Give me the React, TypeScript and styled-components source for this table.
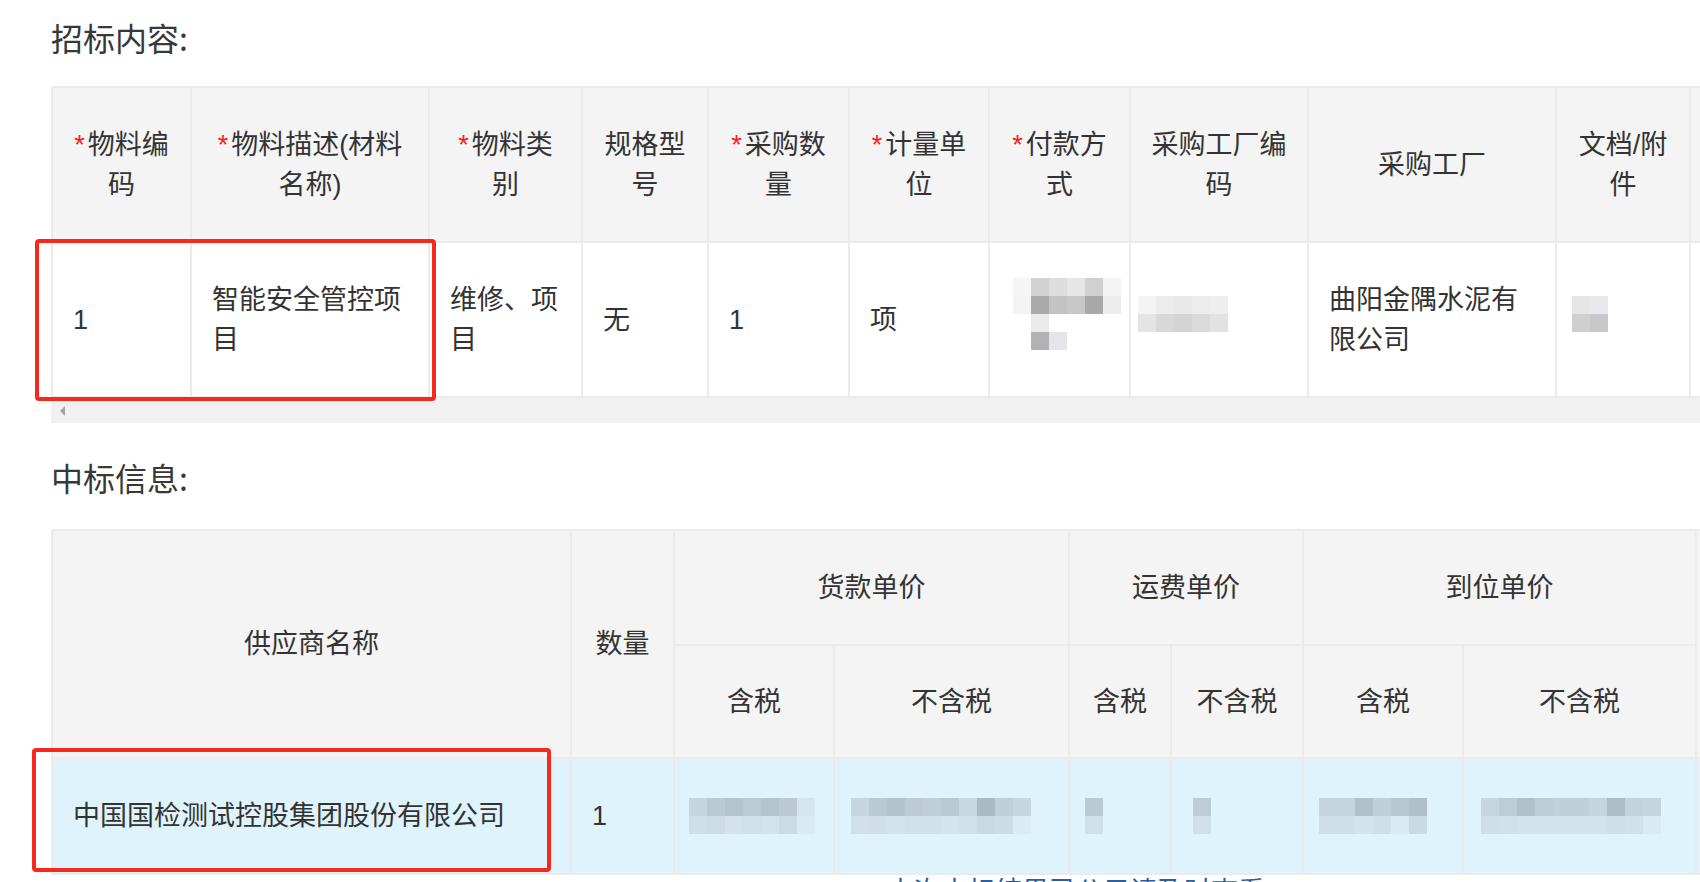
import React from "react";
import styled, { createGlobalStyle } from "styled-components";

const GlobalStyle = createGlobalStyle`
	html, body {
		margin: 0;
		padding: 0;
		overflow: hidden;
		background: #ffffff;
	}
	body {
		font-family: "Liberation Sans", "Noto Sans CJK SC", sans-serif;
		color: #333333;
	}
`;

type BlockRows = Array<Array<string>>;

// greys copied from the blurred cells of the screenshot
const PAY_BLUR: BlockRows = [
	["#f5f5f5", "#d2d2d2", "#dddddd", "#e6e6e6", "#d0d0d0", "#f3f3f3"],
	["#f3f3f3", "#aaaaaa", "#c3c3c3", "#c8c8c8", "#a9a9a9", "#ececef"],
	["#ffffff", "#ebebeb", "#ffffff", "#ffffff", "#ffffff", "#ffffff"],
	["#ffffff", "#b2b2b2", "#e4e4ea", "#ffffff", "#ffffff", "#ffffff"],
];
const FACTORY_CODE_BLUR: BlockRows = [
	["#f4f4f4", "#ececec", "#e8e8e8", "#ececec", "#eeeeee"],
	["#e4e4e4", "#d8d8d8", "#d4d4d4", "#dadada", "#e2e2e2"],
];
const FILE_BLUR: BlockRows = [
	["#e6e6e6", "#e8e8ea"],
	["#cfcfcf", "#c8c8cc"],
];

const GOODS_TAX: BlockRows = [
	["#c5d5de", "#b9cad3", "#b4c4cd", "#bacbd4", "#b4c4cd", "#bac9d3", "#d3e6ef"],
	["#cfdfe8", "#cddde6", "#d3e2eb", "#d0e0e9", "#d3e3ec", "#cadbe3", "#d8ebf3"],
];
const GOODS_NOTAX: BlockRows = [
	["#c5d6df", "#b9cad3", "#b3c3cc", "#bccbd4", "#bfcfd8", "#b9cad3", "#c6d9e2", "#a9bac3", "#bfd0d9", "#c4d6df"],
	["#cfe0e9", "#cfdee7", "#d3e3ec", "#d1e1ea", "#d1e1ea", "#d4e4ed", "#cfe0e9", "#c7d9e2", "#cadce5", "#d9ecf5"],
];
const FREIGHT_TAX: BlockRows = [["#b9cad3"], ["#cfe0e9"]];
const FREIGHT_NOTAX: BlockRows = [["#bccdd6"], ["#cfe0e9"]];
const ARRIVAL_TAX: BlockRows = [
	["#c5d5de", "#c3d4dd", "#b1c1ca", "#c0d0d9", "#b8c8d1", "#b0c0c9"],
	["#cfdfe8", "#cfdfe8", "#d3e3ec", "#cde0e9", "#d8ebf3", "#c8dae3"],
];
const ARRIVAL_NOTAX: BlockRows = [
	["#c5d6df", "#bccdd6", "#b1c1ca", "#bccdd6", "#c0d0d9", "#c0d0d9", "#c4d5de", "#acbdc6", "#c3d3dc", "#c4d5de"],
	["#cfdfe8", "#cfe0e9", "#d3e3ec", "#d3e3ec", "#d3e3ec", "#d3e3ec", "#d3e3ec", "#cfdfe8", "#d0e1ea", "#d8ebf3"],
];

const TENDER_COLS = [139, 238, 153, 126, 141, 140, 141, 178, 248, 134, 150];
const AWARD_COLS = [519, 103, 160, 235, 102, 132, 160, 233, 150];

const tenderHeads: Array<{ label: string; required?: boolean }> = [
	{ label: "物料编码", required: true },
	{ label: "物料描述(材料名称)", required: true },
	{ label: "物料类别", required: true },
	{ label: "规格型号" },
	{ label: "采购数量", required: true },
	{ label: "计量单位", required: true },
	{ label: "付款方式", required: true },
	{ label: "采购工厂编码" },
	{ label: "采购工厂" },
	{ label: "文档/附件" },
	{ label: "" },
];

const Blur: React.FC<{ rows: BlockRows; dx: number; lift?: number }> = ({ rows, dx, lift = 0 }) => (
	<Mosaic $cols={rows[0].length} $dx={dx} $lift={lift}>
		{rows.map((row, r) =>
			row.map((c, i) => <Block key={`${r}-${i}`} $c={c} />)
		)}
	</Mosaic>
);

const App: React.FC = () => {
	return (
		<Page>
			<GlobalStyle />
			{/* tender content */}
			<Title>招标内容:</Title>
			<Section>
				<Scroller>
					<Table $w={TENDER_COLS.reduce((a, b) => a + b, 0)}>
						<colgroup>
							{TENDER_COLS.map((w, i) => (
								<Col key={i} $w={w} />
							))}
						</colgroup>
						<thead>
							<Row $h={155}>
								{tenderHeads.map((h, i) => (
									<Th key={i}>
										{h.required && <Star>*</Star>}
										{h.label}
									</Th>
								))}
							</Row>
						</thead>
						<tbody>
							<Row $h={155}>
								<Td>1</Td>
								<Td>智能安全管控项目</Td>
								<Td>维修、项目</Td>
								<Td>无</Td>
								<Td>1</Td>
								<Td>项</Td>
								<Td>
									<Blur rows={PAY_BLUR} dx={3} lift={12} />
								</Td>
								<Td>
									<Blur rows={FACTORY_CODE_BLUR} dx={-13} lift={12} />
								</Td>
								<Td>曲阳金隅水泥有限公司</Td>
								<Td>
									<Blur rows={FILE_BLUR} dx={-5} lift={12} />
								</Td>
								<Td />
							</Row>
						</tbody>
					</Table>
					<ScrollTrack>
						<ScrollArrow />
					</ScrollTrack>
				</Scroller>
				<Mark $x={-16} $y={153} $w={401} $h={162} />
			</Section>

			{/* award info */}
			<Title $gap={34} $after={32}>中标信息:</Title>
			<Section>
				<Scroller>
					<Table $w={AWARD_COLS.reduce((a, b) => a + b, 0)}>
						<colgroup>
							{AWARD_COLS.map((w, i) => (
								<Col key={i} $w={w} />
							))}
						</colgroup>
						<thead>
							<Row $h={115}>
								<Th rowSpan={2}>供应商名称</Th>
								<Th rowSpan={2}>数量</Th>
								<Th colSpan={2}>货款单价</Th>
								<Th colSpan={2}>运费单价</Th>
								<Th colSpan={2}>到位单价</Th>
								<Th rowSpan={2} />
							</Row>
							<Row $h={113}>
								<Th>含税</Th>
								<Th>不含税</Th>
								<Th>含税</Th>
								<Th>不含税</Th>
								<Th>含税</Th>
								<Th>不含税</Th>
							</Row>
						</thead>
						<tbody>
							<Row $h={116} $active>
								<Td>中国国检测试控股集团股份有限公司</Td>
								<Td>1</Td>
								<Td>
									<Blur rows={GOODS_TAX} dx={-6} />
								</Td>
								<Td>
									<Blur rows={GOODS_NOTAX} dx={-4} />
								</Td>
								<Td>
									<Blur rows={FREIGHT_TAX} dx={-5} />
								</Td>
								<Td>
									<Blur rows={FREIGHT_NOTAX} dx={1} />
								</Td>
								<Td>
									<Blur rows={ARRIVAL_TAX} dx={-5} />
								</Td>
								<Td>
									<Blur rows={ARRIVAL_NOTAX} dx={-3} />
								</Td>
								<Td />
							</Row>
						</tbody>
					</Table>
				</Scroller>
				<Mark $x={-19} $y={219} $w={519} $h={124} />
			</Section>
			<FootNote>本次中标结果已公示请及时查看</FootNote>
		</Page>
	);
};

const Page = styled.div`
	width: 1700px;
	height: 882px;
	box-sizing: border-box;
	padding: 17px 0 0 51px;
	overflow: hidden;
`;
const Title = styled.h2<{ $gap?: number; $after?: number }>`
	margin: ${(p) => p.$gap || 0}px 0 ${(p) => p.$after || 29}px;
	font-size: 32px;
	line-height: 40px;
	font-weight: normal;
	color: #383838;
	font-family: "Noto Sans CJK SC", sans-serif;
`;
const Section = styled.div`
	position: relative;
`;
const Scroller = styled.div`
	width: 100%;
	overflow: hidden;
`;
const Table = styled.table<{ $w: number }>`
	width: ${(p) => p.$w}px;
	table-layout: fixed;
	border-collapse: separate;
	border-spacing: 0;
	border-top: 2px solid #ebebeb;
	border-left: 2px solid #ebebeb;
	font-size: 27px;
	line-height: 40px;
`;
const Col = styled.col<{ $w: number }>`
	width: ${(p) => p.$w}px;
`;
const Row = styled.tr<{ $h: number; $active?: boolean }>`
	height: ${(p) => p.$h}px;
	background: ${(p) => (p.$active ? "#dff3fc" : "#ffffff")};
`;
const Th = styled.th`
	padding: 0 20px;
	background: #f4f4f4;
	border-right: 2px solid #ebebeb;
	border-bottom: 2px solid #ebebeb;
	font-weight: normal;
	text-align: center;
	vertical-align: middle;
	color: #333333;
`;
const Td = styled.td`
	padding: 0 20px;
	border-right: 2px solid #ebebeb;
	border-bottom: 2px solid #ebebeb;
	text-align: left;
	vertical-align: middle;
	color: #333333;
`;
const Star = styled.span`
	color: #ff1a1a;
	font-size: 27px;
	margin-right: 3px;
	font-family: "Liberation Sans", sans-serif;
`;
const Mosaic = styled.div<{ $cols: number; $dx: number; $lift: number }>`
	display: grid;
	grid-template-columns: repeat(${(p) => p.$cols}, 18px);
	grid-auto-rows: 18px;
	margin-left: ${(p) => p.$dx}px;
	margin-bottom: ${(p) => p.$lift}px;
	width: max-content;
`;
const Block = styled.div<{ $c: string }>`
	background: ${(p) => p.$c};
`;
const ScrollTrack = styled.div`
	height: 25px;
	background: #f1f1f1;
	display: flex;
	align-items: center;
	padding-left: 9px;
`;
const ScrollArrow = styled.div`
	width: 0;
	height: 0;
	border-top: 5px solid transparent;
	border-bottom: 5px solid transparent;
	border-right: 5px solid #a3a3a3;
`;
const Mark = styled.div<{ $x: number; $y: number; $w: number; $h: number }>`
	position: absolute;
	left: ${(p) => p.$x}px;
	top: ${(p) => p.$y}px;
	width: ${(p) => p.$w}px;
	height: ${(p) => p.$h}px;
	box-sizing: border-box;
	border: 4px solid #f52a1c;
	border-radius: 4px;
	pointer-events: none;
`;
const FootNote = styled.div`
	padding: 0 0 0 836px;
	font-size: 27px;
	line-height: 30px;
	color: #2d5f9e;
	font-family: "Noto Sans CJK SC", sans-serif;
`;

export default App;
